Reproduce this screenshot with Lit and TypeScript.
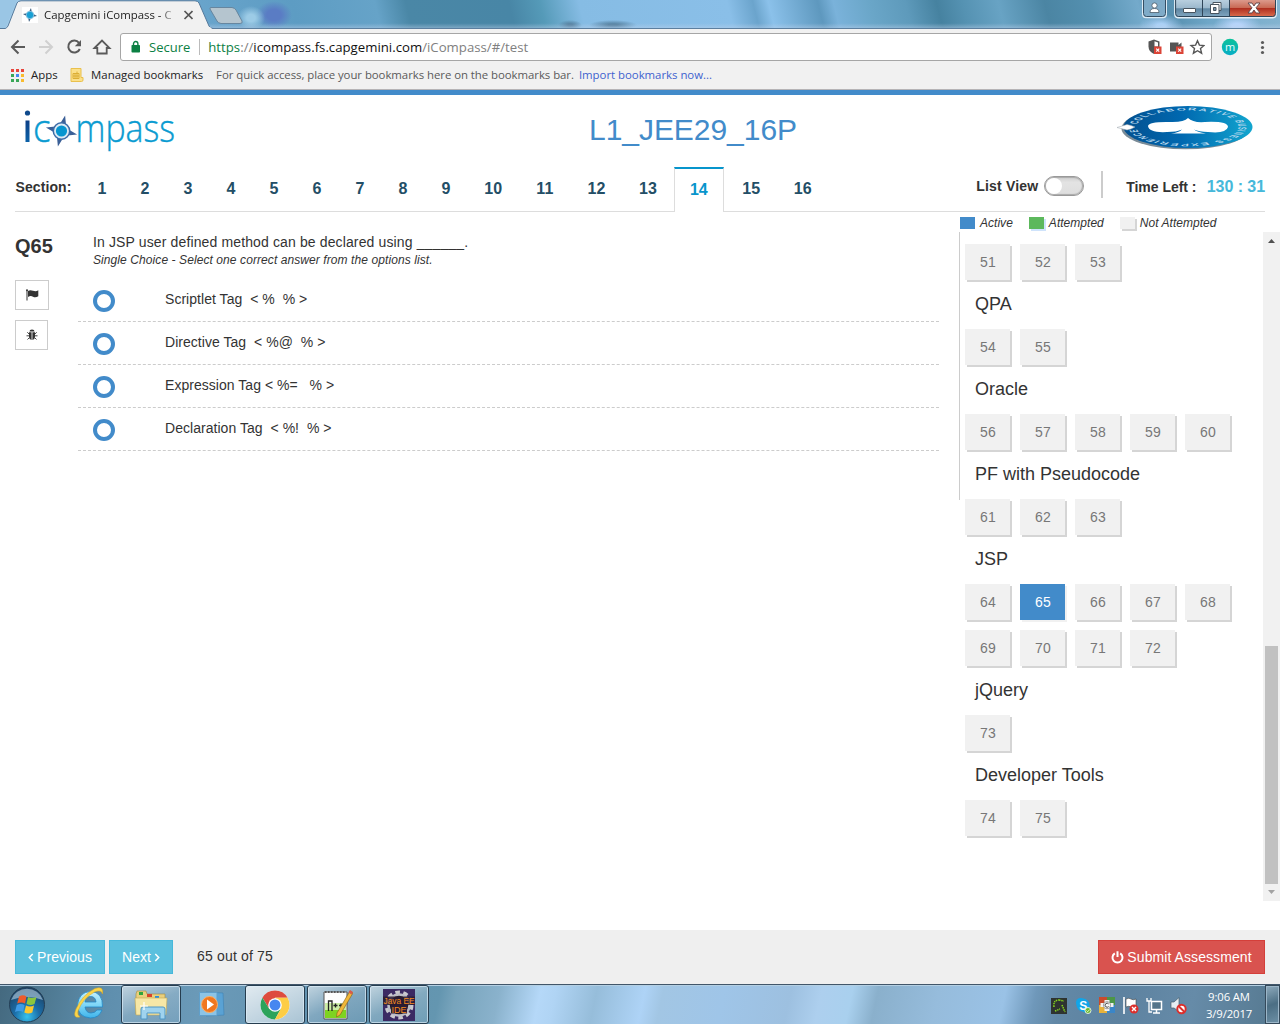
import { LitElement, html, css, svg } from "lit";
import { customElement } from "lit/decorators.js";
import { classMap } from "lit/directives/class-map.js";

const compass = svg`
  <path d="M0-16 L3-7 L-3-7Z M0 16 L3 7 L-3 7Z M-16 0 L-7-3 L-7 3Z M16 0 L7-3 L7 3Z"/>`;

@customElement("browser-chrome")
class BrowserChrome extends LitElement {
  static styles = css`
    :host { display: block; height: 90px; font: 11.4px "Open Sans", "Noto Sans", sans-serif; background: #f1f1f1; }
    .strip {
      height: 29px; box-sizing: border-box; display: flex; align-items: flex-start; position: relative;
      background:
        linear-gradient(180deg, rgba(255,255,255,0) 80%, rgba(190,210,235,.45) 97%, #5c7f9f 97%),
        radial-gradient(ellipse 14px 12px at 251px 18px, #9ccbe6 30%, transparent),
        radial-gradient(ellipse 18px 14px at 274px 15px, #5a7cc4 40%, transparent),
        radial-gradient(ellipse 12px 5px at 570px 25px, #54809f 20%, transparent),
        radial-gradient(ellipse 24px 5px at 613px 25px, #54809f 20%, transparent),
        radial-gradient(ellipse 22px 12px at 1161px 26px, #a9d0f6 20%, transparent),
        radial-gradient(ellipse 24px 12px at 1237px 26px, #b6d4fa 20%, transparent),
        linear-gradient(76deg, #a8d0ec 0, #8fc0e2 60px, #6aa5cc 190px, #5d9cc3 290px, #66a3c8 370px, #4a87a6 400px, #4886a6 500px, #559ab8 530px, #86bce4 568px, #8abfe8 712px, #6ba4cc 737px, #8bc1ea 752px, #5e98be 800px, #7ab2da 815px, #6aa6c8 850px, #5e9abb 885px, #4682a0 915px, #5592b2 940px, #68a3c4 975px, #4b85a3 1020px, #5490b0 1065px, #74aacb 1110px, #548dac 1135px, #6fa7c8 1175px, #84b4d0 1245px);
    }
    .tabart { width: 250px; height: 29px; position: absolute; left: 0; top: 0; }
    .tab { position: relative; display: flex; align-items: center; height: 29px; padding-left: 22px; gap: 6px; }
    .tab svg { display: block; }
    .title { width: 127px; color: #222; white-space: nowrap; overflow: hidden; -webkit-mask-image: linear-gradient(90deg, #000 116px, transparent 133px); mask-image: linear-gradient(90deg, #000 116px, transparent 133px); }
    .spring { flex: 1; }
    .win { position: relative; display: flex; margin-right: 3px; gap: 7px; }
    .bar { height: 33px; display: flex; align-items: center; box-sizing: border-box; padding: 3px 0 0; }
    .nav { display: block; }
    .omni { width: 1092px; height: 28px; box-sizing: border-box; border: 1px solid #a6a6a6; border-radius: 3px; background: #fff; display: flex; align-items: center; padding: 0 6px 0 9px; font-size: 13.2px; white-space: nowrap; }
    .secure { color: #0b8043; font-size: 13px; margin-left: 8px; padding-bottom: 1px; }
    .sep { width: 1px; height: 16px; background: #bbb; margin: 0 8px 0 9px; }
    .url { color: #808080; letter-spacing: .01px; padding-bottom: 1px; }
    .url .s { color: #0b8043; }
    .url b { font-weight: 400; color: #111; }
    .marks { height: 28px; display: flex; align-items: center; box-sizing: border-box; padding: 0 0 1px 11px; white-space: nowrap; color: #222; border-bottom: 1px solid #b6b4b6; }
    .marks span { padding-bottom: 1px; }
    .apps { margin: 0 12.5px 0 7px; }
    .managed { margin: 0 13px 0 7px; }
    .note { color: #5a5a5a; letter-spacing: -.045px; }
    .imp { color: #3e62cf; margin-left: 5px; letter-spacing: -.02px; }
  `;
  render() {
    return html`
      <div class="strip">
        <svg class="tabart" viewBox="0 0 250 29">
          <path d="M0 28.5 H5 Q7 28 8 26 L17 3 Q18 1 21 .8 H195 Q198 1 199 3 L209 26 Q210 28.5 213 28.5 V30 H0Z" fill="#f1f1f1" stroke="#567a9c"/>
          <path d="M0 29H12L8 27H210L213 30H0Z" fill="#f1f1f1"/><path d="M0 0H17L6 27.5Q5 28 0 28Z" fill="#9ac6e5"/>
          <path d="M211 7.5H232Q235 8 236 10L242 21Q243 23.500 240 23.500H221Q218 23 217 21L210 9Q209.500 7.500 211 7.500Z" fill="#b5c5cf" stroke="#67869f"/>
        </svg>
        <div class="tab">
          <svg width="16" height="16" viewBox="-18 -18 36 36"><rect x="-18" y="-18" width="36" height="36" fill="#fff"/><g fill="#34597c" transform="rotate(8)">${compass}</g><circle r="8.500" fill="#18a0d4" stroke="#8fc4e2" stroke-width="2"/></svg>
          <div class="title">Capgemini iCompass - C</div>
          <svg width="16" height="16" viewBox="0 0 16 16"><path d="M7.500 4l8 8M15.500 4l-8 8" stroke="#555" stroke-width="1.700"/></svg>
        </div>
        <div class="spring"></div>
        <div class="win">
          <svg width="25" height="19" viewBox="0 0 25 19"><path d="M.8 0V14Q.8 17.500 4 17.500H21Q24.200 17.500 24.200 14V0" fill="#7fabc8" stroke="#dcebf5" stroke-width="1.600"/><path d="M1.500 0V13.500Q1.500 16.500 4.500 16.500H20.500Q23.500 16.500 23.500 13.500V0" fill="none" stroke="#364e63"/><circle cx="12.500" cy="5.500" r="2.600" fill="#fff" stroke="#4a5a68" stroke-width=".8"/><path d="M8 12.500Q8 8.500 12.500 8.500T17 12.500Z" fill="#fff" stroke="#4a5a68" stroke-width=".8"/></svg>
          <svg width="103" height="19" viewBox="0 0 103 19">
            <defs><linearGradient id="r" x2="0" y2="1"><stop offset="0" stop-color="#dc9a8c"/><stop offset=".45" stop-color="#c96a55"/><stop offset=".5" stop-color="#b03020"/><stop offset="1" stop-color="#dd7050"/></linearGradient>
            <linearGradient id="g" x2="0" y2="1"><stop offset="0" stop-color="#b8cfdf"/><stop offset=".45" stop-color="#9cb8cc"/><stop offset=".5" stop-color="#5f86a2"/><stop offset="1" stop-color="#84a9c2"/></linearGradient></defs>
            <path d="M.8 0V14Q.8 17.500 4 17.500H99Q102.200 17.500 102.200 14V0Z" fill="url(#g)"/>
            <path d="M56 0V17H98Q102 17 102 13.500V0Z" fill="url(#r)"/>
            <path d="M.8 0V14Q.8 17.700 4 17.700H99Q102.200 17.700 102.200 14V0" fill="none" stroke="#e4eff7" stroke-width="1.400"/>
            <path d="M1.600 0V13.500Q1.600 16.500 4.500 16.500H98.500Q101.500 16.500 101.500 13.500V0M28.500 0V16M55.500 0V16" fill="none" stroke="#2f4558"/>
            <rect x="9.500" y="8.500" width="12" height="4" rx=".5" fill="#fff" stroke="#48545f"/>
            <path d="M39 2.500h8v8h-8z" fill="#fff" stroke="#48545f"/><path d="M36.500 4.500h8.500v9h-8.500z" fill="#fff" stroke="#48545f"/><path d="M39.500 7.500h2.500v3h-2.500z" fill="#7696ac" stroke="#48545f"/>
            <path d="M74 3h4l2 3 2-3h4l-4 4.800 4 5.200h-4l-2-3-2 3h-4l4-5.200z" fill="#fff" stroke="#5a4248" stroke-width=".9"/>
          </svg>
        </div>
      </div>
      <div class="bar">
        <svg class="nav" width="120" height="30" viewBox="0 0 120 30" fill="none" stroke="#5a5a5a" stroke-width="2">
          <path d="M25 15H12.500M18.500 8.500L12 15l6.500 6.500"/>
          <path d="M39 15H51.500M45.500 8.500L52 15l-6.500 6.500" stroke="#d0d0d0"/>
          <path d="M79 10.800A6 6 0 1 0 79.800 17"/><path d="M81 8v6.200h-6.200z" fill="#5a5a5a" stroke="none"/>
          <path d="M94.500 16L102 8.500L109.500 16H106.700V21.500H97.300V16Z" stroke-width="1.800"/>
        </svg>
        <div class="omni">
          <svg width="11" height="14" viewBox="0 0 11 14"><rect x="1.500" y="5" width="8.500" height="7.500" rx=".8" fill="#0b8043"/><path d="M3.500 5.500V3.700a2.200 2.200 0 0 1 4.400 0V5.500" fill="none" stroke="#0b8043" stroke-width="1.400"/></svg>
          <span class="secure">Secure</span><span class="sep"></span>
          <span class="url"><span class="s">https</span>://<b>icompass.fs.capgemini.com</b>/iCompass/#/test</span>
          <span class="spring"></span>
          <svg width="60" height="20" viewBox="0 0 60 20">
            <path d="M9 2.500l5.500 2v5q0 5-5.500 7.500-5.500-2.500-5.500-7.500v-5z" fill="#555"/><path d="M9.500 4.200l3.500 1.300v4H9.500z" fill="#fff"/>
            <rect x="9" y="9.500" width="7.500" height="7.500" fill="#db4437"/><path d="M11.200 11.700l3 3M14.200 11.700l-3 3" stroke="#fff" stroke-width="1.200"/>
            <path d="M25 5.500h8.500v2.500l3-2.500v9H25z" fill="#555"/>
            <rect x="31" y="9.500" width="7.500" height="7.500" fill="#db4437"/><path d="M33.200 11.700l3 3M36.200 11.700l-3 3" stroke="#fff" stroke-width="1.200"/>
            <path d="M52.500 3.800l1.900 4.300 4.600.4-3.500 3.100 1.100 4.600-4.100-2.500-4.100 2.500 1.100-4.600L46 8.500l4.600-.4z" fill="none" stroke="#555" stroke-width="1.400"/>
          </svg>
        </div>
        <svg width="66" height="28" viewBox="0 0 66 28"><defs><linearGradient id="m" x2="0" y2="1"><stop offset="0" stop-color="#0cc29a"/><stop offset="1" stop-color="#07adc6"/></linearGradient></defs>
          <circle cx="18" cy="14" r="8.200" fill="url(#m)"/><text x="18" y="17.500" font-size="11" fill="#e8ffff" text-anchor="middle">m</text>
          <g fill="#5a5a5a"><circle cx="50.500" cy="9.500" r="1.600"/><circle cx="50.500" cy="14.500" r="1.600"/><circle cx="50.500" cy="19.500" r="1.600"/></g></svg>
      </div>
      <div class="marks">
        <svg width="13" height="13" viewBox="0 0 13 13"><path fill="#e8453c" d="M0 0h3v3H0zM5 0h3v3H5zM10 0h3v3h-3z"/><path fill="#3aa757" d="M0 5h3v3H0zM0 10h3v3H0z"/><path fill="#4688f1" d="M5 5h3v3H5z"/><path fill="#3aa757" d="M5 10h3v3H5z"/><path fill="#f9bb2d" d="M10 5h3v3h-3zM10 10h3v3h-3z"/></svg>
        <span class="apps">Apps</span>
        <svg width="14" height="14" viewBox="0 0 14 14"><path d="M1 .5h10v9h2v2.500q0 1.500-1.500 1.500H1z" fill="#fbe08a" stroke="#e9c04d"/><path d="M3 5.500h6v5H3zM3 8h6M5 5.500v5M7 3.500v7" fill="none" stroke="#dcae35"/></svg>
        <span class="managed">Managed bookmarks</span>
        <span class="note">For quick access, place your bookmarks here on the bookmarks bar.</span>
        <span class="imp">Import bookmarks now...</span>
      </div>`;
  }
}

@customElement("test-header")
class TestHeader extends LitElement {
  static styles = css`
    :host { display: block; border-top: 5px solid #428bca; font-family: "Liberation Sans", Arial, sans-serif; color: #333; }
    .brand { height: 72px; display: grid; grid-template-columns: 500px 386px 1fr; }
    h1 { margin: 0; font-size: 30px; line-height: 33px; font-weight: 400; color: #428bca; text-align: center; padding-top: 18px; letter-spacing: -.04px; }
    .seal { justify-self: end; margin-right: 15px; }
    .row { height: 45px; margin: 0 15px; display: flex; box-shadow: inset 0 -1px #ddd; font-weight: 700; font-size: 14px; }
    .label { width: 65.500px; box-sizing: border-box; padding-left: .5px; line-height: 40px; letter-spacing: .1px; }
    .tabs { display: flex; font-size: 16px; color: #234e66; text-align: center; line-height: 44px; }
    .tab { width: 43px; letter-spacing: .1px; }
    .tab.wide { width: 51.600px; }
    .tab.on { width: 50px; box-sizing: border-box; margin-right: 1.600px; border: 1px solid #ddd; border-top: 2px solid #0795cc; border-bottom: 0; background: #fff; color: #0795cc; line-height: 41px; }
    .spring { flex: 1; }
    .lv { line-height: 38px; letter-spacing: .17px; }
    .toggle { width: 40px; height: 20px; box-sizing: border-box; margin: 9px 17px 0 6px; border-radius: 10px; border: 1px solid #999; background: linear-gradient(#cfcfcf, #e3e3e3 30%, #dedede); box-shadow: inset 0 0 1px 1px #aaa; padding: 1px; }
    .knob { display: block; width: 16px; height: 16px; border-radius: 8px; background: #fff; }
    .bar { width: 2px; height: 27px; background: #ccc; margin: 4px 23px 0 0; }
    .tl { line-height: 40px; width: 80.500px; letter-spacing: -.04px; }
    .time { color: #46b8da; font-size: 16px; line-height: 39px; letter-spacing: -.06px; }
  `;
  render() {
    return html`
      <div class="brand">
        <svg width="220" height="72" viewBox="0 0 220 72">
          <defs><linearGradient id="i" x2="0" y2="1"><stop offset="0" stop-color="#0d3f86"/><stop offset="1" stop-color="#0c62a8"/></linearGradient></defs>
          <circle cx="27.500" cy="18" r="2.600" fill="#0f4a8c"/><rect x="25.500" y="25.500" width="4" height="21.500" fill="url(#i)"/>
          <g font-family="'Open Sans'" font-weight="300" font-size="39" fill="#0a9bd1" stroke="#0a9bd1" stroke-width=".4">
            <text x="33" y="46.500" textLength="17.500" lengthAdjust="spacingAndGlyphs">c</text>
            <text x="75.500" y="46.500" textLength="99.500" lengthAdjust="spacingAndGlyphs">mpass</text></g>
          <g transform="translate(61.500 36)"><g fill="#3a5f97" transform="rotate(13)">${compass}</g><circle r="8.200" fill="#dbeaf5" stroke="#3d6ba6" stroke-width="1.500"/><circle r="5.600" fill="#0795cf"/></g>
        </svg>
        <h1>L1_JEE29_16P</h1>
        <svg class="seal" width="150" height="65" viewBox="0 0 150 65">
          <defs><linearGradient id="s" x1="0" x2="1"><stop offset="0" stop-color="#04508f"/><stop offset=".45" stop-color="#0068b0"/><stop offset="1" stop-color="#12a6cf"/></linearGradient>
          <path id="ring" d="M-16.600 0A16.600 16.600 0 0 1 16.600 0A16.600 16.600 0 0 1 -16.600 0"/></defs>
          <ellipse cx="70.500" cy="33.500" rx="64" ry="20.800" fill="#4e6474" opacity=".75"/>
          <ellipse cx="73" cy="32" rx="64.500" ry="21" fill="url(#s)"/>
          <path d="M2 32.500L12 29.500L16 30.500L20 32L16 34L12 35Z" fill="#fff" stroke="#9aa5ad" stroke-width=".5"/>
          <g transform="translate(72.500 32) scale(3.070 1)"><text font-family="'Liberation Sans'" font-weight="700" font-size="3.800" fill="#b5d6ec"><textPath href="#ring" startOffset="3" textLength="98">COLLABORATIVE BUSINESS EXPERIENCE</textPath></text></g>
          <path d="M73 23Q78 28 90 27Q113 26 113 32Q111 39 93 37Q84 36.500 79 34.500Q82 37 91 38.500H56Q64 37.500 67 34.500Q62 37 52 37Q34 38 33 31Q34 26.500 55 27Q69 27.500 73 23Z" fill="#fff"/>
        </svg>
      </div>
      <div class="row">
        <span class="label">Section:</span>
        <div class="tabs">${Array.from({ length: 16 }, (_, k) => k + 1).map(n => html`<span class=${classMap({ tab: true, wide: n > 9 && n !== 14, on: n === 14 })}>${n}</span>`)}</div>
        <span class="spring"></span>
        <span class="lv">List View</span><span class="toggle"><span class="knob"></span></span>
        <span class="bar"></span><span class="tl">Time Left :</span><span class="time">130 : 31</span>
      </div>`;
  }
}

@customElement("question-pane")
class QuestionPane extends LitElement {
  static styles = css`
    :host { display: grid; grid-template-columns: 63px 861px; padding-left: 15px; font: 14px/20px "Liberation Sans", Arial, sans-serif; color: #333; }
    h2 { margin: 20px 0 20px; font-size: 20px; line-height: 28px; }
    .tool { display: flex; align-items: center; justify-content: center; box-sizing: border-box; width: 34px; height: 30px; border: 1px solid #ccc; margin-bottom: 10px; }
    .tool.narrow { width: 33px; }
    .q { padding: 20px 15px 0; letter-spacing: .13px; }
    .hint { padding: 0 15px; font-size: 12px; line-height: 16px; font-style: italic; letter-spacing: .085px; height: 27px; box-sizing: border-box; }
    .opt { height: 43px; box-sizing: border-box; display: flex; border-bottom: 1px dashed #ccc; padding-left: 15px; letter-spacing: .04px; white-space: pre; }
    .ring { width: 22px; height: 22px; box-sizing: border-box; border: 4px solid #428bca; border-radius: 50%; margin: 11px 50px 0 0; }
    .opt span { padding-top: 10px; }
  `;
  render() {
    const options = ["Scriptlet Tag  < %  % >", "Directive Tag  < %@  % >", "Expression Tag < %=   % >", "Declaration Tag  < %!  % >"];
    return html`
      <div>
        <h2>Q65</h2>
        <div class="tool"><svg width="13" height="12" viewBox="0 0 13 12" fill="#333"><path d="M.5 1.500h1v10h-1z"/><circle cx="1" cy="1.300" r="1"/><path d="M2 2Q4 .5 7 1.700T12.300 1.200V7.300Q9.500 9 7 7.700T2 8Z"/></svg></div>
        <div class="tool narrow"><svg width="12" height="12" viewBox="0 0 12 12" fill="#333"><path d="M3.500 2.500a2.500 2 0 0 1 5 0z"/><path d="M3 3.200h2.600v7.800Q3 10.300 3 8zM6.400 3.200H9v4.800q0 2.300-2.600 3z"/><path d="M3 5L1.300 3.200M3 6.800H.5M3.200 8.800L1.500 10.500M9 5l1.700-1.800M9 6.800h2.500M8.800 8.800l1.700 1.700" stroke="#333" stroke-width=".9"/></svg></div>
      </div>
      <div>
        <div class="q">In JSP user defined method can be declared using ______.</div>
        <div class="hint">Single Choice - Select one correct answer from the options list.</div>
        <div>${options.map(o => html`<div class="opt"><i class="ring"></i><span>${o}</span></div>`)}</div>
      </div>`;
  }
}

@customElement("question-map")
class QuestionMap extends LitElement {
  static styles = css`
    :host { display: block; font: 14px "Liberation Sans", Arial, sans-serif; color: #333; }
    .legend { display: flex; height: 20px; font-size: 12px; font-style: italic; line-height: 22px; padding-left: 1px; letter-spacing: .03px; }
    .legend i { width: 15px; height: 12px; margin: 5px 5px 0 0; background: #428bca; }
    .legend span { margin-right: 16px; }
    .legend .g { background: #5cb85c; box-shadow: 2px 2px #cfe3fb; }
    .legend .n { background: #f1f1f1; box-shadow: 2px 2px #d5d5d5; }
    .body { display: grid; grid-template-columns: 1px 303px 17px; height: 669px; }
    .rule { height: 268px; background: #ccc; }
    .list { padding: 12px 0 0 5px; }
    .cells { display: grid; grid-template-columns: repeat(5, 45px); gap: 10px; }
    .cell { height: 36px; line-height: 36px; text-align: center; background: #f1f1f1; box-shadow: 2px 2px #d5d5d5; color: #777; letter-spacing: .2px; text-indent: 1px; }
    .cell.on { background: #428bca; color: #fff; box-shadow: 2px 2px #f1f1f1; }
    h3 { margin: 0; padding-left: 10px; font-weight: 400; font-size: 18px; line-height: 48px; height: 49px; }
    .scroll { background: #f1f1f1; display: flex; flex-direction: column; justify-content: space-between; }
    svg { display: block; }
  `;
  render() {
    const groups: [string, number, number][] = [["", 51, 53], ["QPA", 54, 55], ["Oracle", 56, 60], ["PF with Pseudocode", 61, 63], ["JSP", 64, 72], ["jQuery", 73, 73], ["Developer Tools", 74, 75]];
    return html`
      <div class="legend"><i></i><span>Active</span><i class="g"></i><span>Attempted</span><i class="n"></i><span>Not Attempted</span></div>
      <div class="body">
        <div class="rule"></div>
        <div class="list">${groups.map(([name, a, b]) => html`
          ${name ? html`<h3>${name}</h3>` : null}
          <div class="cells">${Array.from({ length: b - a + 1 }, (_, k) => a + k).map(n => html`<div class=${classMap({ cell: true, on: n === 65 })}>${n}</div>`)}</div>`)}</div>
        <div class="scroll">
          <svg width="17" height="17" viewBox="0 0 17 17"><path d="M5 11h7L8.500 7z" fill="#505050"/></svg>
          <svg width="17" height="255" viewBox="0 0 17 255"><rect x="2" width="13" height="238" fill="#c1c1c1"/><path d="M5 244h7L8.500 248z" fill="#a3a3a3"/></svg>
        </div>
      </div>`;
  }
}

@customElement("test-footer")
class TestFooter extends LitElement {
  static styles = css`
    :host { display: flex; align-items: center; height: 54px; box-sizing: border-box; background: #efefef; padding: 0 15px; font: 14px "Liberation Sans", Arial, sans-serif; color: #333; }
    .btn { height: 34px; box-sizing: border-box; background: #5bc0de; border: 1px solid #46b8da; color: #fff; display: flex; align-items: center; justify-content: center; width: 90px; gap: 3px; letter-spacing: .06px; margin-right: 4px; }
    .next { width: 64px; margin-right: 24px; }
    .count { flex: 1; letter-spacing: .17px; padding-bottom: 2px; }
    .danger { width: 167px; margin: 0; background: #d9534f; border-color: #d43f3a; letter-spacing: .08px; }
  `;
  render() {
    return html`
      <div class="btn"><svg width="6" height="9" viewBox="0 0 6 9"><path d="M4.700 1L1.300 4.500l3.400 3.500" fill="none" stroke="#fff" stroke-width="1.500"/></svg>Previous</div>
      <div class="btn next">Next<svg width="6" height="9" viewBox="0 0 6 9"><path d="M1.300 1l3.400 3.500-3.400 3.500" fill="none" stroke="#fff" stroke-width="1.500"/></svg></div>
      <div class="count">65 out of 75</div>
      <div class="btn danger"><svg width="13" height="13" viewBox="0 0 13 13" fill="none" stroke="#fff" stroke-width="2"><path d="M3.800 2.300a5 5 0 1 0 5.400 0M6.500 .3v5.700"/></svg>Submit Assessment</div>`;
  }
}

@customElement("task-bar")
class TaskBar extends LitElement {
  static styles = css`
    :host { display: flex; height: 40px; box-sizing: border-box; border-top: 1px solid #41566a; box-shadow: inset 0 1px #b4cfe2; font: 11.300px "Open Sans", "Noto Sans", sans-serif; color: #fff;
      background: linear-gradient(102deg, #44697f 0, #4f7a93 50px, #5f8fae 110px, #6b9ab8 200px, #5f90ae 340px, #6496b0 432px, #78a4bc 448px, #8ab2cc 490px, #b5d8f8 530px, #b0d4f4 545px, #96bdda 585px, #aed3f6 632px, #a2c6e4 650px, #9fc5e8 710px, #9dc0e0 775px, #adcfee 805px, #a9d0ee 835px, #8ab0cc 860px, #96bcdc 920px, #9ac2e6 985px, #6f98ba 1015px, #6288a6 1040px, #5d82a0 1100px, #668ba8 1170px, #55788f 1260px); }
    .app { width: 60px; height: 39px; box-sizing: border-box; border: 1px solid #263d4f; border-radius: 3px; box-shadow: inset 0 0 0 1px rgba(225,240,250,.65); background: linear-gradient(155deg, rgba(255,255,255,.6), rgba(255,255,255,.2) 50%, rgba(255,255,255,.08)); display: flex; align-items: center; justify-content: center; margin-right: 2px; }
    .app.hot { background: linear-gradient(155deg, rgba(255,255,255,.8), rgba(255,255,255,.45)); }
    svg { display: block; }
    .spring { flex: 1; }
    .clock { width: 75px; box-sizing: border-box; text-align: center; line-height: 17px; padding: 3px 0 0 3px; letter-spacing: -.1px; }
    .peek { width: 15px; border: 1px solid #34495a; box-shadow: inset 0 0 0 1px #9cb6c8; box-sizing: border-box; background: linear-gradient(160deg, #8fabbd, #4b6e84 50%, #6d90a6); }
  `;
  render() {
    return html`
      <svg width="121" height="39" viewBox="0 0 121 39">
        <defs><radialGradient id="o" cx=".5" cy=".85" r=".8"><stop offset="0" stop-color="#37c3ee"/><stop offset=".45" stop-color="#1b6da8"/><stop offset="1" stop-color="#1d4263"/></radialGradient>
        <linearGradient id="e" x2="0" y2="1"><stop offset="0" stop-color="#c5f0fc"/><stop offset=".5" stop-color="#7fd6f7"/><stop offset="1" stop-color="#3fb4ea"/></linearGradient></defs>
        <circle cx="27" cy="19.500" r="17.500" fill="url(#o)" stroke="#253f55"/><path d="M11 15a17 17 0 0 1 32 0q-16-6-32 0z" fill="#c9dfec" opacity=".55"/>
        <path d="M19 11.500q4-2.500 7.500 0L25 18.500q-4-2-7.800 0z" fill="#ee5b2b"/><path d="M28 12q4 2 8.500 0L34.500 19q-4 2-8 0z" fill="#8cc63e"/><path d="M16.800 20q4-2 7.800 0L23 27q-4-2-8 0z" fill="#3f9be6"/><path d="M26 20.500q4 2 8 0L32.300 27.500q-4 2-8 0z" fill="#fdc72e"/>
        <path d="M102.500 22H85Q86 28 91 28Q95 28 97 25H102Q99 33 90.500 33Q77.500 32 77.500 19.500Q79 7 90.500 6.500Q103 7 102.500 22ZM96 17Q95.500 11.500 90.500 11.500Q85.500 11.500 85 17Z" fill="url(#e)" fill-rule="evenodd" stroke="#2288c8" stroke-width=".8"/>
        <path d="M80 32q-8 2-4-8Q82 10 95 3.500q9-3 7.500 5.500-1-5-8-2Q83 13 78 26q-1 4 2 6z" fill="#fad54b" stroke="#dca71b" stroke-width=".5"/>
      </svg>
      <div class="app"><svg width="34" height="32" viewBox="0 0 34 32"><path d="M2 5l1-3h9l1 3h18v20H2z" fill="#e9cf7d" stroke="#a38a3d" stroke-width=".6"/><path d="M5 3h4v3H5z" fill="#2da43c"/><path d="M13 5h5v3h-5z" fill="#d9432b"/><path d="M21 7h4v3h-4z" fill="#2b8fdf"/><path d="M1 9h32l-1 17H2z" fill="#f7e7a6" stroke="#c3a856" stroke-width=".6"/><path d="M7 30V20q0-2 2-2h20q2 0 2 2v10h-5v-6H13v6z" fill="#9fd3ee" stroke="#4f97c6"/><path d="M10 13v8M6 17h8" stroke="#fff" stroke-width="1.200"/></svg></div>
      <svg width="62" height="39" viewBox="0 0 62 39"><path d="M23 7l17 1 1 22-18 1z" fill="#5aa2d4" stroke="#3f83b4" stroke-width=".6"/><path d="M16.500 7.500h17.500v23H16.500z" fill="#8cc4e6" stroke="#5f9fca"/><circle cx="26.500" cy="19.500" r="8" fill="#f0771f" stroke="#fbb26a"/><path d="M24 14.500v10l7-5z" fill="#fff"/></svg>
      <div class="app hot"><svg width="30" height="30" viewBox="-15 -15 30 30"><circle r="14.500" fill="#fff"/><path d="M-12.600-7.200A14.500 14.500 0 0 1 12.600-7.200H0L-5.800 3.800Z" fill="#dd4b3e"/><path d="M-12.600-7.200A14.500 14.500 0 0 0 0 14.500L6 3.500L-5.800 3.800Z" fill="#2da35b"/><path d="M12.600-7.200A14.500 14.500 0 0 1 0 14.500L6 3.500L0-7.200Z" fill="#fdcd45"/><circle r="6.800" fill="#fff"/><circle r="5.500" fill="#4687f0"/></svg></div>
      <div class="app"><svg width="32" height="32" viewBox="0 0 32 32"><path d="M3 3h23v27H3z" fill="#fdfdfd" stroke="#555"/><path d="M4 20h21v9H4z" fill="#7ed321"/><path d="M4 14h21v7H4z" fill="#cdeea6"/><path d="M4 3h20" stroke="#555" stroke-width="2" stroke-dasharray="1.500 1.500"/><path d="M7.500 22V12h3.500v10M12.500 16.500h4M14.500 14.500v4M18 16.500h4M20 14.500v4" fill="none" stroke="#222" stroke-width="1.300"/><path d="M29 2l3 2-13 22-3.500 2 .5-4z" fill="#f0b73a" stroke="#875e16" stroke-width=".6"/><path d="M29 1l3 2-1.500 2.500-3-2z" fill="#d95b4c"/></svg></div>
      <div class="app"><svg width="36" height="32" viewBox="-2 0 36 32"><rect width="32" height="32" fill="#3b2a63"/><circle cx="16" cy="16" r="12.500" fill="none" stroke="#c9c9cf" stroke-width="4" stroke-dasharray="4.500 3.350"/><circle cx="16" cy="16" r="10.500" fill="#1f1828" stroke="#bdbdc6" stroke-width="2.500"/><rect y="7.500" width="32" height="8.500" fill="#2a1c33" opacity=".85"/><rect x="8" y="16" width="16" height="8.500" fill="#2a1c33"/><g font-family="'Liberation Sans'" font-size="9" fill="#f58a1f" text-anchor="middle"><text x="16" y="15" textLength="31" lengthAdjust="spacingAndGlyphs">Java EE</text><text x="16" y="23.500">IDE</text></g></svg></div>
      <span class="spring"></span>
      <svg width="140" height="39" viewBox="0 0 140 39">
        <rect x="1" y="13" width="16" height="16" fill="#2e3330"/><path d="M4 22q-1-7 5-7M9 15l5 1M12 20l3 7M5 26l5-2" fill="none" stroke="#84d61c" stroke-width="1.500" stroke-dasharray="1.500 .8"/>
        <circle cx="33" cy="20" r="6.500" fill="#12a5e8"/><circle cx="30.500" cy="17.500" r="4.500" fill="#12a5e8"/><circle cx="36" cy="23.500" r="4" fill="#12a5e8"/><text x="33.200" y="24.500" font-family="'Liberation Sans'" font-size="12" font-weight="700" fill="#fff" text-anchor="middle">S</text><circle cx="38" cy="25.500" r="3" fill="#6bb82c" stroke="#fff" stroke-width=".8"/><path d="M36.500 25.500l1.200 1.200 2-2.200" fill="none" stroke="#fff" stroke-width=".8"/>
        <path d="M49 12h8v8h-8z" fill="#c94a2c"/><path d="M57 12h8v8h-8z" fill="#4c9646"/><path d="M49 20h8v8h-8z" fill="#e8b23a"/><path d="M57 20h8v8h-8z" fill="#3a86c8"/><path d="M54.500 15h5v3h4v4h-4v4h-5v-4h-4v-4h4z" fill="#f2f2f2"/><circle cx="57" cy="20.200" r="3.600" fill="#f8f8f8" stroke="#888" stroke-width=".8"/><path d="M58.600 18.900a2 2 0 1 0 0 2.600" fill="none" stroke="#444"/>
        <path d="M74 12v17" stroke="#fff" stroke-width="1.600"/><path d="M76 14q3-1.500 5 0t5 0v8q-3 1.500-5 0t-5 0z" fill="#fff" stroke="#444" stroke-width=".6"/><circle cx="84" cy="24" r="4.500" fill="#dc2f2c"/><path d="M82 22l4 4M86 22l-4 4" stroke="#fff" stroke-width="1.400"/>
        <path d="M101.500 16.500h10v8h-10z" fill="#54748a" stroke="#fff" stroke-width="1.500"/><path d="M103 28h7M106.500 25v3" stroke="#fff" stroke-width="1.500"/><path d="M97 13v3h4v-3M99 16v11h3" fill="none" stroke="#fff" stroke-width="1.300"/>
        <path d="M121 17h3l5-4.500v14L124 23h-3z" fill="#e6edf2" stroke="#48606f" stroke-width=".7"/><circle cx="131.500" cy="24" r="4.200" fill="#fff" stroke="#dc2f2c" stroke-width="2"/><path d="M128.500 21l6 6" stroke="#dc2f2c" stroke-width="2"/>
      </svg>
      <div class="clock"><div>9:06 AM</div><div>3/9/2017</div></div>
      <div class="peek"></div>`;
  }
}

@customElement("app-root")
class AppRoot extends LitElement {
  static styles = css`
    :host { display: flex; flex-direction: column; width: 1280px; height: 1024px; background: #fff; overflow: hidden; }
    .main { flex: 1; display: grid; grid-template-columns: 959px 321px; }
  `;
  render() {
    return html`<browser-chrome></browser-chrome><test-header></test-header>
      <div class="main"><question-pane></question-pane><question-map></question-map></div>
      <test-footer></test-footer><task-bar></task-bar>`;
  }
}
